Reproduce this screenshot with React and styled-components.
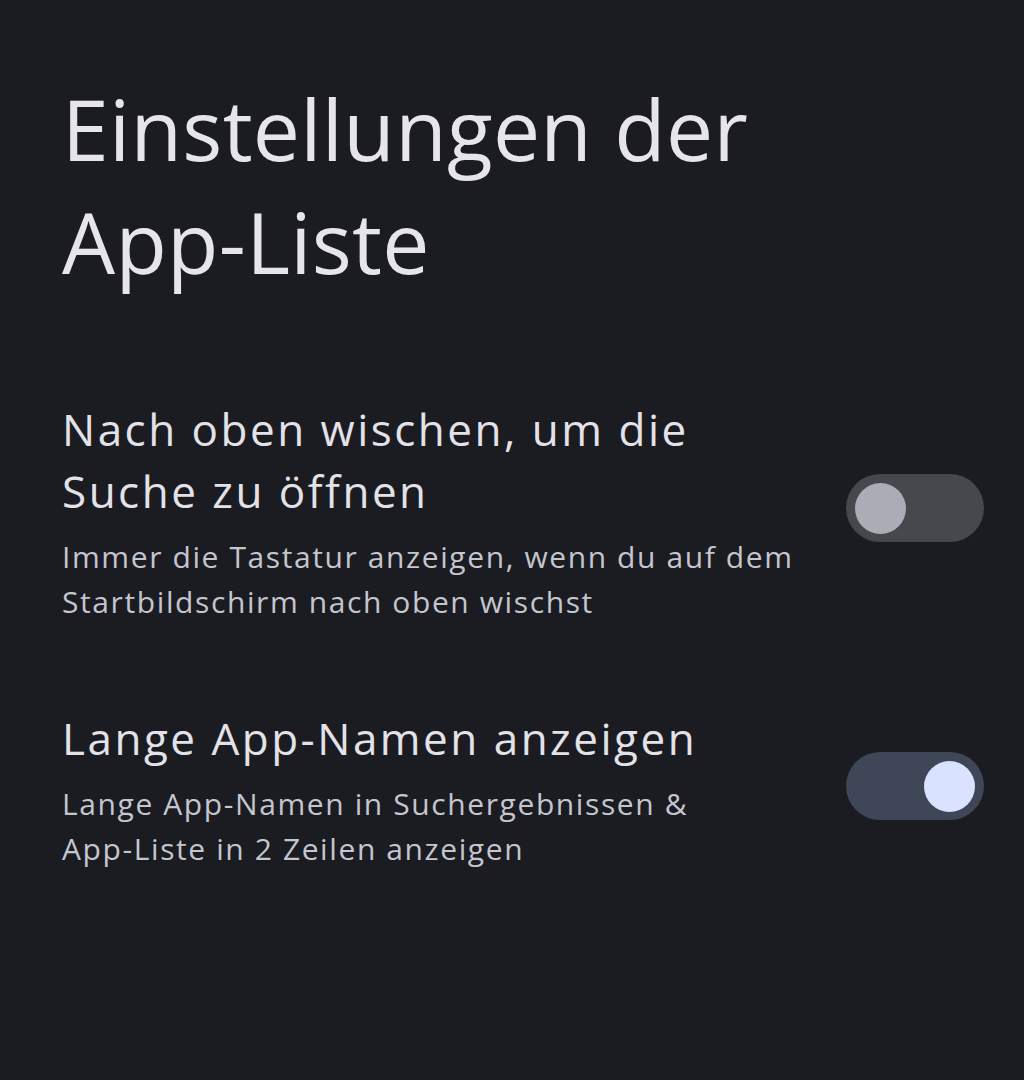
import React from "react";
import styled, { createGlobalStyle } from "styled-components";

const Global = createGlobalStyle`
  html, body { margin: 0; padding: 0; background: #1b1c21; }
  body { font-family: "Open Sans", Roboto, sans-serif; }
`;

const Page = styled.div`
  width: 1024px;
  height: 1080px;
  background: #1b1c21;
  box-sizing: border-box;
  padding: 72px 40px 0 62px;
  display: flex;
  flex-direction: column;
`;

const Title = styled.h1`
  margin: 0 0 100px 0;
  font-family: "Open Sans", Roboto, sans-serif;
  font-weight: 400;
  font-size: 84px;
  line-height: 113px;
  color: #e6e5ea;
  letter-spacing: 0.3px;
`;

const List = styled.div`
  display: flex;
  flex-direction: column;
  gap: 83px;
`;

const Row = styled.div`
  display: flex;
  align-items: center;
  justify-content: space-between;
  gap: 20px;
`;

const Texts = styled.div`
  display: flex;
  flex-direction: column;
`;

const ItemTitle = styled.div`
  font-size: 44px;
  line-height: 62px;
  letter-spacing: 2.5px;
  color: #e3e2e8;
  white-space: nowrap;
`;

const ItemSub = styled.div`
  font-size: 30px;
  line-height: 45px;
  letter-spacing: 1.6px;
  color: #c4c5cf;
  margin-top: 12px;
  white-space: nowrap;
`;

const Track = styled.div`
  flex: none;
  width: 138px;
  height: 68px;
  margin-bottom: 6px;
  border-radius: 34px;
  box-sizing: border-box;
  padding: 0 9px;
  display: flex;
  align-items: center;
  justify-content: ${(p) => (p.$on ? "flex-end" : "flex-start")};
  background: ${(p) => (p.$on ? "#3f4657" : "#47484d")};
`;

const Thumb = styled.div`
  width: 51px;
  height: 51px;
  border-radius: 50%;
  background: ${(p) => (p.$on ? "#d9e2ff" : "#abacb5")};
`;

const Toggle = ({ on }) => (
  <Track $on={on}>
    <Thumb $on={on} />
  </Track>
);

export default function App() {
  return (
    <>
      <Global />
      <Page>
        <Title>
          Einstellungen der
          <br />
          App-Liste
        </Title>
        <List>
          <Row>
            <Texts>
              <ItemTitle>
                Nach oben wischen, um die
                <br />
                Suche zu öffnen
              </ItemTitle>
              <ItemSub>
                Immer die Tastatur anzeigen, wenn du auf dem
                <br />
                Startbildschirm nach oben wischst
              </ItemSub>
            </Texts>
            <Toggle on={false} />
          </Row>
          <Row>
            <Texts>
              <ItemTitle>Lange App-Namen anzeigen</ItemTitle>
              <ItemSub>
                Lange App-Namen in Suchergebnissen &amp;
                <br />
                App-Liste in 2 Zeilen anzeigen
              </ItemSub>
            </Texts>
            <Toggle on={true} />
          </Row>
        </List>
      </Page>
    </>
  );
}
